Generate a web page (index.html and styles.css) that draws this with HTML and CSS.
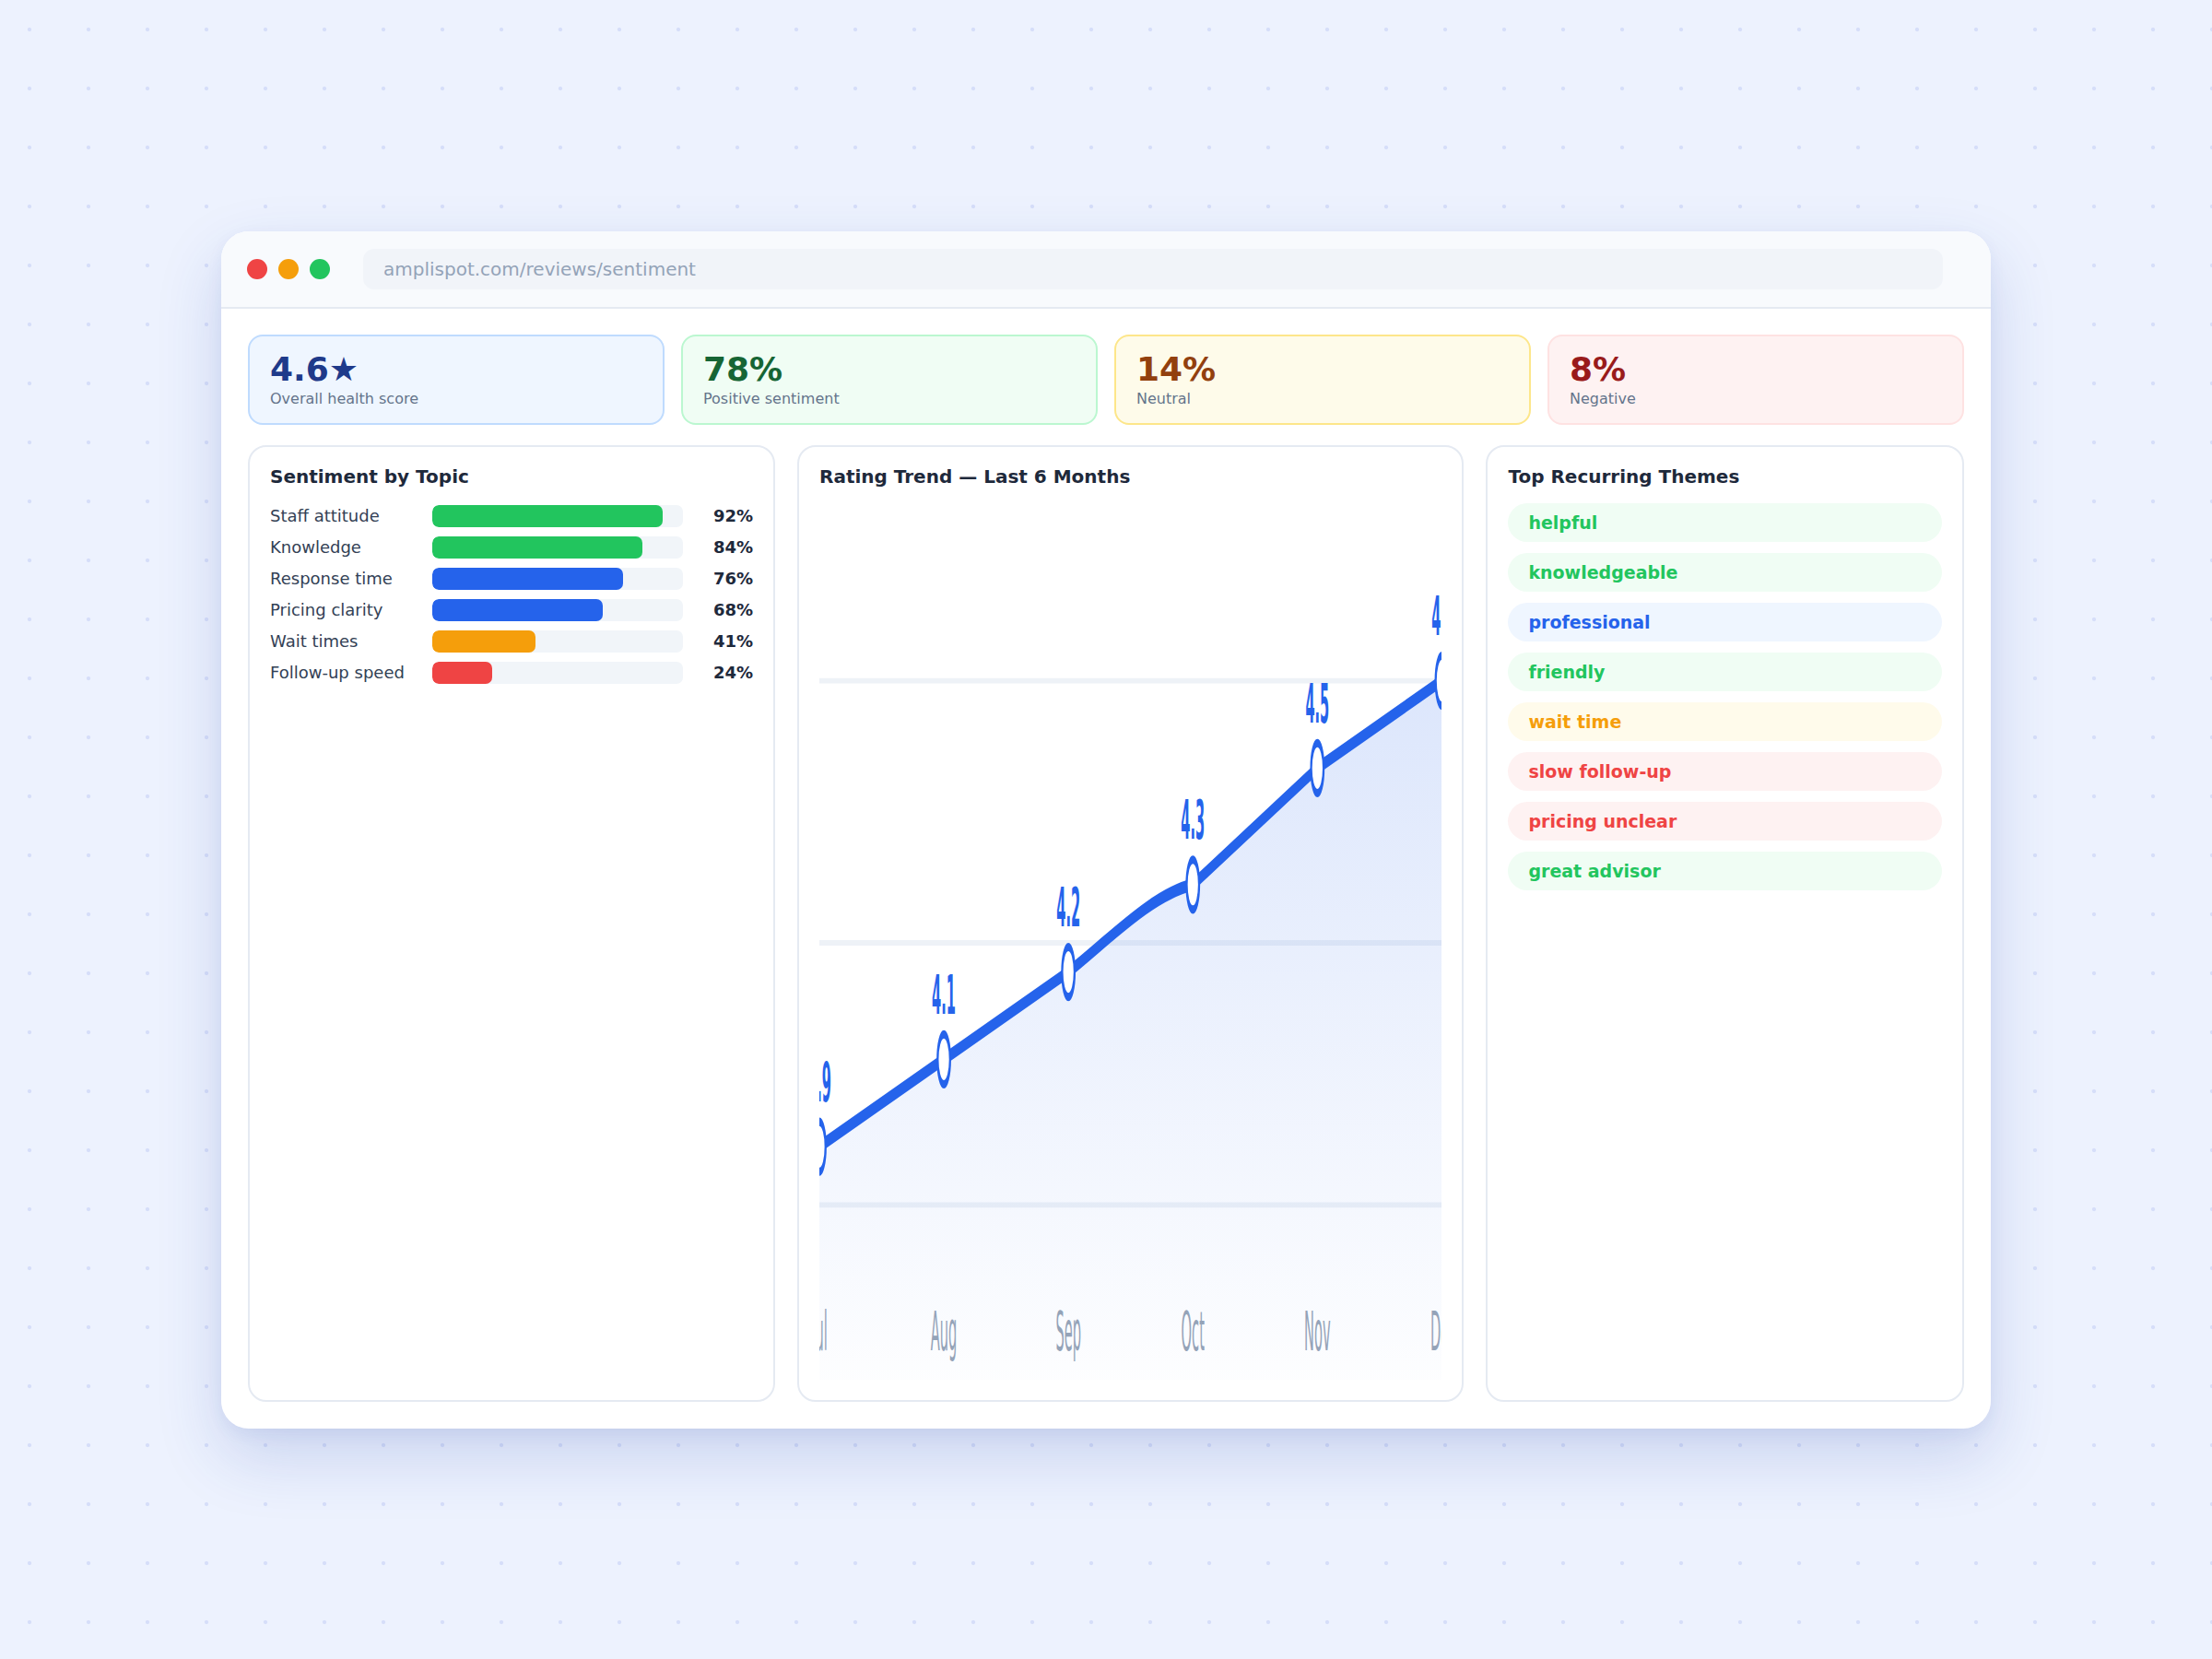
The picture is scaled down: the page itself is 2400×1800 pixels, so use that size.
FILE: index.html
```html
<!DOCTYPE html>
<html lang="en">
<head>
<meta charset="utf-8">
<title>Amplispot – Review Sentiment</title>
<link rel="stylesheet" href="styles.css">
</head>
<body>
<div class="window">
  <div class="titlebar">
    <div class="lights">
      <span class="light red"></span>
      <span class="light amber"></span>
      <span class="light green"></span>
    </div>
    <div class="url">amplispot.com/reviews/sentiment</div>
  </div>
  <div class="content">
    <div class="stats">
      <div class="stat stat-blue">
        <div class="stat-value">4.6★</div>
        <div class="stat-label">Overall health score</div>
      </div>
      <div class="stat stat-green">
        <div class="stat-value">78%</div>
        <div class="stat-label">Positive sentiment</div>
      </div>
      <div class="stat stat-amber">
        <div class="stat-value">14%</div>
        <div class="stat-label">Neutral</div>
      </div>
      <div class="stat stat-red">
        <div class="stat-value">8%</div>
        <div class="stat-label">Negative</div>
      </div>
    </div>
    <div class="panels">
      <div class="panel">
        <div class="panel-title">Sentiment by Topic</div>
        <div class="topics">
          <div class="topic"><span class="topic-label">Staff attitude</span><div class="track"><div class="fill fill-green" style="width:92%"></div></div><span class="pct">92%</span></div>
          <div class="topic"><span class="topic-label">Knowledge</span><div class="track"><div class="fill fill-green" style="width:84%"></div></div><span class="pct">84%</span></div>
          <div class="topic"><span class="topic-label">Response time</span><div class="track"><div class="fill fill-blue" style="width:76%"></div></div><span class="pct">76%</span></div>
          <div class="topic"><span class="topic-label">Pricing clarity</span><div class="track"><div class="fill fill-blue" style="width:68%"></div></div><span class="pct">68%</span></div>
          <div class="topic"><span class="topic-label">Wait times</span><div class="track"><div class="fill fill-amber" style="width:41%"></div></div><span class="pct">41%</span></div>
          <div class="topic"><span class="topic-label">Follow-up speed</span><div class="track"><div class="fill fill-red" style="width:24%"></div></div><span class="pct">24%</span></div>
        </div>
      </div>
      <div class="panel">
        <div class="panel-title">Rating Trend — Last 6 Months</div>
        <svg class="chart" viewBox="0 0 600 210" preserveAspectRatio="none">
          <defs>
            <linearGradient id="areaFill" gradientUnits="userSpaceOnUse" x1="0" y1="42" x2="0" y2="210">
              <stop offset="0" stop-color="#2563eb" stop-opacity="0.16"/>
              <stop offset="1" stop-color="#2563eb" stop-opacity="0.01"/>
            </linearGradient>
          </defs>
          <line class="grid" x1="0" y1="42" x2="600" y2="42"/>
          <line class="grid" x1="0" y1="105" x2="600" y2="105"/>
          <line class="grid" x1="0" y1="168" x2="600" y2="168"/>
          <path class="area" d="M0,154 L120,133 L240,112 C280,104 320,93.5 360,91 L480,63 L600,42 L600,210 L0,210 Z" fill="url(#areaFill)"/>
          <path class="trend" d="M0,154 L120,133 L240,112 C280,104 320,93.5 360,91 L480,63 L600,42"/>
          <circle class="pt" cx="0" cy="154" r="6"/>
          <circle class="pt" cx="120" cy="133" r="6"/>
          <circle class="pt" cx="240" cy="112" r="6"/>
          <circle class="pt" cx="360" cy="91" r="6"/>
          <circle class="pt" cx="480" cy="63" r="6"/>
          <circle class="pt" cx="600" cy="42" r="6"/>
          <text class="val" x="0" y="143">3.9</text>
          <text class="val" x="120" y="122">4.1</text>
          <text class="val" x="240" y="101">4.2</text>
          <text class="val" x="360" y="80">4.3</text>
          <text class="val" x="480" y="52">4.5</text>
          <text class="val" x="601.5" y="31">4.6</text>
          <text class="month" x="0" y="203">Jul</text>
          <text class="month" x="120" y="203">Aug</text>
          <text class="month" x="240" y="203">Sep</text>
          <text class="month" x="360" y="203">Oct</text>
          <text class="month" x="480" y="203">Nov</text>
          <text class="month" x="601.5" y="203">Dec</text>
        </svg>
      </div>
      <div class="panel">
        <div class="panel-title">Top Recurring Themes</div>
        <div class="themes">
          <div class="pill pill-green">helpful</div>
          <div class="pill pill-green">knowledgeable</div>
          <div class="pill pill-blue">professional</div>
          <div class="pill pill-green">friendly</div>
          <div class="pill pill-amber">wait time</div>
          <div class="pill pill-red">slow follow-up</div>
          <div class="pill pill-red">pricing unclear</div>
          <div class="pill pill-green">great advisor</div>
        </div>
      </div>
    </div>
  </div>
</div>
</body>
</html>
```

FILE: styles.css
```css
* { box-sizing: border-box; }

html, body {
  margin: 0;
  padding: 0;
}

body {
  min-height: 100vh;
  display: flex;
  align-items: center;
  justify-content: center;
  background-color: #edf2fe;
  background-image: radial-gradient(circle, #d6def9 0, #d6def9 1.6px, rgba(214, 222, 249, 0) 2.6px);
  background-size: 64px 64px;
  font-family: "DejaVu Sans", "Noto Sans", sans-serif;
  color: #1e293b;
}

.window {
  width: 1920px;
  background: #ffffff;
  border-radius: 30px;
  overflow: hidden;
  box-shadow: 0 30px 70px rgba(37, 72, 170, 0.18), 0 6px 18px rgba(37, 72, 170, 0.06);
}

.titlebar {
  height: 84px;
  display: flex;
  align-items: center;
  gap: 36px;
  padding: 0 52px 0 28px;
  background: #f8fafd;
  border-bottom: 2px solid #e5eaf2;
}

.lights {
  display: flex;
  gap: 12px;
}

.light {
  width: 22px;
  height: 22px;
  border-radius: 50%;
  display: block;
}

.red { background: #ef4444; }
.amber { background: #f59e0b; }
.green { background: #22c55e; }

.url {
  flex: 1;
  height: 44px;
  border-radius: 12px;
  background: #f1f4f9;
  padding: 0 22px;
  display: flex;
  align-items: center;
  font-size: 20px;
  color: #94a3b8;
}

.content {
  padding: 28px 29px 29px;
}

.stats {
  display: grid;
  grid-template-columns: repeat(4, 1fr);
  gap: 18px;
}

.stat {
  border: 2px solid;
  border-radius: 16px;
  padding: 16px 22px;
}

.stat-value {
  font-size: 36px;
  line-height: 40px;
  font-weight: 700;
}

.stat-label {
  margin-top: 2px;
  font-size: 16px;
  line-height: 20px;
  color: #64748b;
}

.stat-blue { background: #eff6ff; border-color: #bfdbfe; }
.stat-blue .stat-value { color: #1e3a8a; }
.stat-green { background: #f0fdf4; border-color: #bbf7d0; }
.stat-green .stat-value { color: #166534; }
.stat-amber { background: #fefbea; border-color: #fde68a; }
.stat-amber .stat-value { color: #92400e; }
.stat-red { background: #fef2f2; border-color: #fee2e2; }
.stat-red .stat-value { color: #991b1b; }

.panels {
  margin-top: 22px;
  height: 1038px;
  display: grid;
  grid-template-columns: 1.103fr 1.395fr 1fr;
  gap: 24px;
}

.panel {
  border: 2px solid #e5eaf2;
  border-radius: 20px;
  padding: 21px 22px 22px;
  display: flex;
  flex-direction: column;
  min-width: 0;
  background: #ffffff;
}

.panel-title {
  font-size: 20px;
  line-height: 22px;
  font-weight: 700;
  color: #1e293b;
  margin-bottom: 18px;
}

.topics {
  display: flex;
  flex-direction: column;
  gap: 6px;
}

.topic {
  display: grid;
  grid-template-columns: 160px 1fr 60px;
  gap: 16px;
  align-items: center;
  height: 28px;
}

.topic-label {
  font-size: 18px;
  color: #334155;
  white-space: nowrap;
}

.track {
  height: 24px;
  border-radius: 7px;
  background: #f1f5f9;
  overflow: hidden;
}

.fill {
  height: 100%;
  border-radius: 7px;
}

.fill-green { background: #22c55e; }
.fill-blue { background: #2563eb; }
.fill-amber { background: #f59e0b; }
.fill-red { background: #ef4444; }

.pct {
  font-size: 18px;
  font-weight: 700;
  text-align: right;
  color: #1e293b;
}

.chart {
  display: block;
  width: 100%;
  height: 948px;
  margin-top: 3px;
}

.grid {
  stroke: #eef2f7;
  stroke-width: 1.3;
}

.trend {
  fill: none;
  stroke: #2563eb;
  stroke-width: 3;
  stroke-linejoin: round;
  stroke-linecap: round;
}

.pt {
  fill: #ffffff;
  stroke: #2563eb;
  stroke-width: 2;
}

.val {
  font-family: "DejaVu Sans", sans-serif;
  font-size: 13px;
  font-weight: 700;
  fill: #2563eb;
  text-anchor: middle;
}

.month {
  font-family: "DejaVu Sans", sans-serif;
  font-size: 13px;
  fill: #94a3b8;
  text-anchor: middle;
}

.themes {
  display: flex;
  flex-direction: column;
  gap: 12px;
}

.pill {
  height: 42px;
  border-radius: 21px;
  padding: 0 22px;
  display: flex;
  align-items: center;
  font-size: 19px;
  font-weight: 700;
}

.pill-green { background: #f0fdf4; color: #22c55e; }
.pill-blue { background: #eff6ff; color: #2563eb; }
.pill-amber { background: #fffbeb; color: #f59e0b; }
.pill-red { background: #fef2f2; color: #ef4444; }
```
